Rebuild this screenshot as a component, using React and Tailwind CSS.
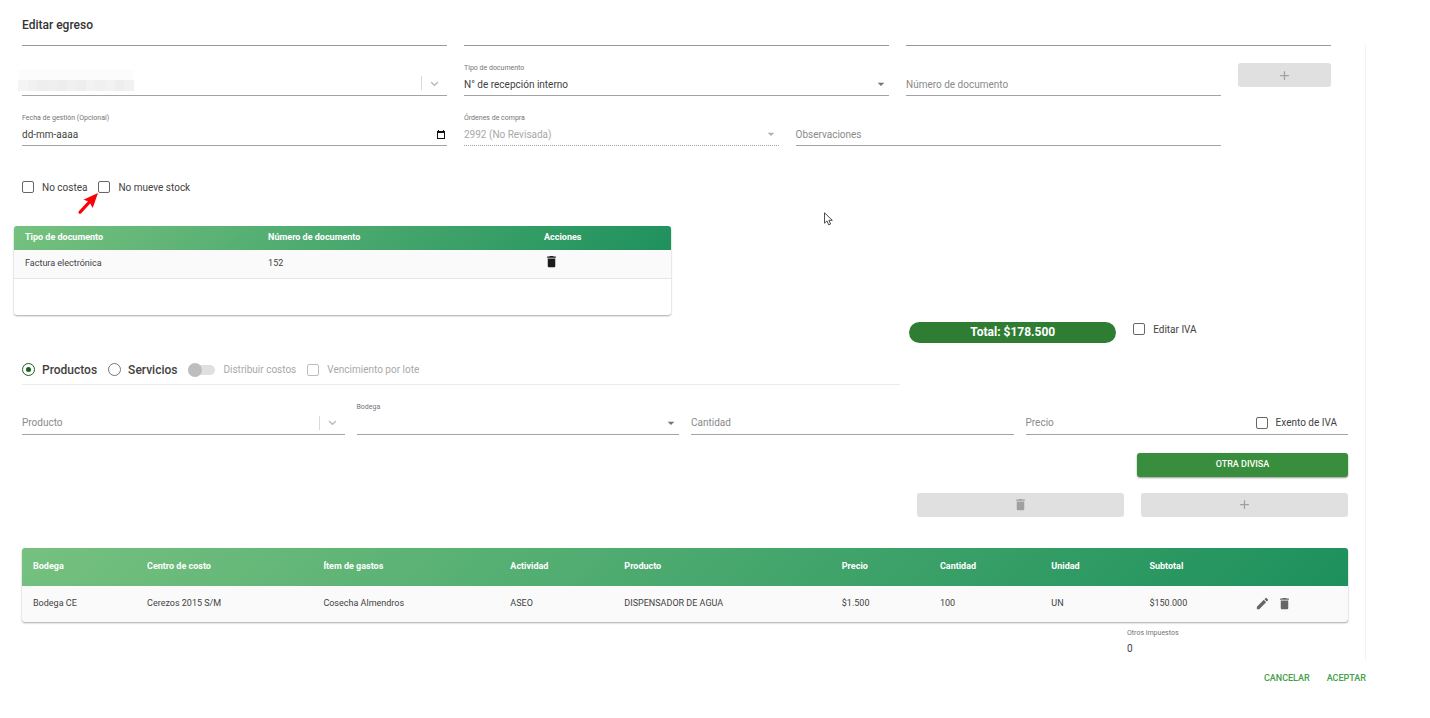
import React, { useId } from "react";
import { MdAdd, MdArrowDropDown, MdDelete, MdEdit } from "react-icons/md";

const line = "border-b border-[#a3a3a3]";

function Chevron() {
  return (
    <span className="flex items-center">
      <span className="h-[14px] w-px bg-[#d9d9d9]" />
      <svg viewBox="0 0 20 20" className="mx-[6px] size-[13px] fill-[#bdbdbd]" aria-hidden="true">
        <path d="M4.516 7.548c0.436-0.446 1.043-0.481 1.576 0l3.908 3.747 3.908-3.747c0.533-0.481 1.141-0.446 1.574 0 0.436 0.445 0.408 1.197 0 1.615-0.406 0.418-4.695 4.502-4.695 4.502-0.217 0.223-0.502 0.335-0.787 0.335s-0.57-0.112-0.789-0.335c0 0-4.287-4.084-4.695-4.502s-0.436-1.17 0-1.615z" />
      </svg>
    </span>
  );
}

function CalendarIcon() {
  return (
    <svg viewBox="0 0 8 9" className="h-[9px] w-2" aria-hidden="true">
      <path fill="#111" d="M0 1h1V0h1v1h4V0h1v1h1v8H0zM1 3v5h6V3z" />
    </svg>
  );
}

/* Text box whose label rests on the line until something is typed. */
function RestingField({ label, end, className = "" }) {
  const id = useId();
  return (
    <div className={`flex flex-col pt-[10px] ${line} ${className}`}>
      <div className="flex h-[22px] items-center">
        <div className="grid h-full min-w-0 flex-1 items-center">
          <input
            id={id}
            type="text"
            placeholder=" "
            className="peer col-start-1 row-start-1 h-full w-full min-w-0 bg-transparent text-[10px] text-[#424242] outline-none"
          />
          <label
            htmlFor={id}
            className="invisible col-start-1 row-start-1 text-[10px] text-[#8a8a8a] peer-placeholder-shown:visible"
          >
            {label}
          </label>
        </div>
        {end}
      </div>
    </div>
  );
}

function DateField({ label, className = "" }) {
  const id = useId();
  return (
    <div className={`flex flex-col ${line} ${className}`}>
      <label htmlFor={id} className="h-[10px] text-[7px] leading-[10px] text-[#757575]">
        {label}
      </label>
      <div className="flex h-[22px] items-center">
        <input
          id={id}
          type="text"
          placeholder="dd-mm-aaaa"
          className="h-full min-w-0 flex-1 bg-transparent text-[10px] text-[#424242] outline-none placeholder:text-[#424242]"
        />
        <button type="button" aria-label="Abrir calendario" className="mr-[2px]">
          <CalendarIcon />
        </button>
      </div>
    </div>
  );
}

function SelectField({ label, value, disabled, className = "" }) {
  const id = useId();
  return (
    <div className={`flex flex-col ${disabled ? "border-b border-dotted border-[#a3a3a3]" : line} ${className}`}>
      <label htmlFor={id} className="h-[10px] text-[7px] leading-[10px] text-[#757575]">
        {label}
      </label>
      <div className="grid h-[22px] items-center">
        <select
          id={id}
          disabled={disabled}
          className={`col-start-1 row-start-1 h-full w-full appearance-none bg-transparent text-[10px] outline-none ${
            disabled ? "text-[#a8a8a8] opacity-100" : "text-[#424242]"
          }`}
        >
          <option>{value}</option>
        </select>
        <MdArrowDropDown
          className={`pointer-events-none col-start-1 row-start-1 size-4 justify-self-end ${
            disabled ? "text-[#b0b0b0]" : "text-[#757575]"
          }`}
          aria-hidden="true"
        />
      </div>
    </div>
  );
}

function Check({ label, disabled }) {
  return (
    <label className={`flex items-center gap-2 text-[10px] whitespace-nowrap ${disabled ? "text-[#a8a8a8]" : "text-[#424242]"}`}>
      <input
        type="checkbox"
        disabled={disabled}
        className={`size-3 shrink-0 appearance-none rounded-[2px] border checked:bg-[#2e7d32] ${
          disabled ? "border-[#bdbdbd]" : "border-[#666]"
        }`}
      />
      {label}
    </label>
  );
}

function Radio({ label, checked }) {
  return (
    <label className="flex items-center gap-[7px] text-[12px] font-medium text-[#424242]">
      <input
        type="radio"
        name="tipo"
        defaultChecked={checked}
        className="size-[13px] shrink-0 appearance-none rounded-full border border-[#757575] bg-clip-content p-[3px] checked:border-[#1b5e20] checked:bg-[#1b5e20]"
      />
      {label}
    </label>
  );
}

function GreyButton({ label, children, className = "" }) {
  return (
    <button
      type="button"
      disabled
      aria-label={label}
      className={`flex h-6 items-center justify-center rounded-[3px] bg-[#e0e0e0] text-[#a0a0a0] ${className}`}
    >
      {children}
    </button>
  );
}

const gradient = "bg-[linear-gradient(135deg,#76c17f_0%,#1b8f5c_100%)]";
const card = "overflow-hidden rounded-[3px] shadow-[0_1px_2px_rgba(0,0,0,0.35)]";

const columns = [
  ["Bodega", "Bodega CE", "w-[8.6%]"],
  ["Centro de costo", "Cerezos 2015 S/M", "w-[13.3%]"],
  ["Ítem de gastos", "Cosecha Almendros", "w-[14.1%]"],
  ["Actividad", "ASEO", "w-[8.6%]"],
  ["Producto", "DISPENSADOR DE AGUA", "w-[16.4%]"],
  ["Precio", "$1.500", "w-[7.4%]"],
  ["Cantidad", "100", "w-[8.4%]"],
  ["Unidad", "UN", "w-[7.4%]"],
  ["Subtotal", "$150.000", "w-[8.1%]"],
];

const tiles = [
  "bg-[#f4f4f4]", "bg-[#f1f1f1]", "bg-[#eeeeee]", "bg-[#efefef]", "bg-[#ededed]", "bg-[#f0f0f0]",
  "bg-[#eeeeee]", "bg-[#f2f2f2]", "bg-[#f0f0f0]", "bg-[#f2f2f2]", "bg-[#eeeeee]", "bg-[#f1f1f1]",
];

function PersonField({ className = "" }) {
  return (
    <div className={`relative flex flex-col ${line} ${className}`}>
      <div className="flex h-8 items-end pb-[5px]">
        <input type="text" aria-label="Proveedor" className="h-4 min-w-0 flex-1 bg-transparent text-[10px] outline-none" />
        <Chevron />
      </div>
      <div className="absolute bottom-1 -left-1 w-[116px]" aria-hidden="true">
        <div className="h-[10px] bg-[#fcfcfc]" />
        <div className="flex h-[11px]">
          {tiles.map((t, i) => (
            <span key={i} className={`flex-1 ${t}`} />
          ))}
        </div>
      </div>
    </div>
  );
}

export default function App() {
  return (
    <div className="relative bg-white pr-16 font-['Roboto',sans-serif] text-[#424242]">
      <header className="flex h-[45px] items-center pt-1 pl-[22px]">
        <h1 className="text-[12px] font-medium text-[#333]">Editar egreso</h1>
      </header>

      <main className="border-r border-[#f3f3f3] pr-[17px] pl-[22px]">
        <section className="mr-[17px] grid grid-cols-12 gap-[17px]">
          <div className="col-span-4 h-px bg-[#999]" />
          <div className="col-span-4 h-px bg-[#999]" />
          <div className="col-span-4 h-px bg-[#999]" />

          <PersonField className="col-span-4" />
          <SelectField className="col-span-4" label="Tipo de documento" value="N° de recepción interno" />
          <RestingField className="col-span-3" label="Número de documento" />
          <GreyButton label="Agregar documento">
            <MdAdd className="size-[15px]" />
          </GreyButton>

          <DateField className="col-span-4" label="Fecha de gestión (Opcional)" />
          <SelectField className="col-span-3" disabled label="Órdenes de compra" value="2992 (No Revisada)" />
          <RestingField className="col-span-4" label="Observaciones" />
        </section>

        <div className="relative mt-[31px] flex h-5 items-center gap-[11px]">
          <Check label="No costea" />
          <Check label="No mueve stock" />
          <svg viewBox="0 0 20 21" className="absolute top-4 left-[56px] h-[21px] w-5 fill-[#fb0007]" aria-hidden="true">
            <path d="M20 0L14.7 15L12.2 10.6L3.2 20.2Q1.6 21.4.7 20.2Q0 19.2 1 18L10 8.2L5.4 6.7Z" />
          </svg>
        </div>

        <section className="mt-[29px] -ml-2 w-[calc(50%-6px)]">
          <div className={`${card} pb-9`}>
            <table className={`w-full table-fixed border-collapse text-left text-[9px] ${gradient}`}>
              <thead>
                <tr className="h-6 text-white">
                  <th className="w-[37%] pl-[11px] font-bold">Tipo de documento</th>
                  <th className="w-[42%] pl-[11px] font-bold">Número de documento</th>
                  <th className="pl-[11px] font-bold">Acciones</th>
                </tr>
              </thead>
              <tbody>
                <tr className="h-7 border-b border-[#e6e6e6] bg-[#fafafa]">
                  <td className="pl-[11px]">Factura electrónica</td>
                  <td className="pl-[11px]">152</td>
                  <td className="pb-1 pl-[11px]">
                    <button type="button" aria-label="Eliminar documento" className="flex text-[#1c1c1c]">
                      <MdDelete className="size-[15px]" />
                    </button>
                  </td>
                </tr>
              </tbody>
            </table>
          </div>
        </section>

        <section className="mt-[7px] -ml-2 mr-2 grid grid-cols-12 items-start gap-[17px]">
          <div className="col-span-2 col-start-9 rounded-full bg-[#2e7d32] text-center text-[12px] leading-[21px] font-bold text-white">
            Total: $178.500
          </div>
          <div className="col-span-2">
            <Check label="Editar IVA" />
          </div>
        </section>

        <section className="grid grid-cols-12 gap-x-[17px]">
          <div className="col-span-8 flex h-[42px] items-end gap-[11px] border-b border-[#ebebeb] pb-[5px]">
            <Radio label="Productos" checked />
            <Radio label="Servicios" />
            <label className="flex h-[18px] items-center gap-2 text-[10px] text-[#a8a8a8]">
              <input
                type="checkbox"
                role="switch"
                disabled
                className="flex h-[10px] w-[27px] appearance-none items-center rounded-full bg-[#e0e0e0] before:size-[14px] before:shrink-0 before:rounded-full before:bg-[#bdbdbd]"
              />
              Distribuir costos
            </label>
            <div className="flex h-[18px] items-center">
              <Check label="Vencimiento por lote" disabled />
            </div>
          </div>
        </section>

        <section className="mt-[17px] grid grid-cols-4 gap-3">
          <RestingField label="Producto" end={<Chevron />} />
          <SelectField label="Bodega" value="" />
          <RestingField label="Cantidad" />
          <RestingField
            label="Precio"
            end={
              <div className="pr-[11px]">
                <Check label="Exento de IVA" />
              </div>
            }
          />
        </section>

        <div className="mt-[18px] flex justify-end">
          <button
            type="button"
            className="h-6 w-[211px] rounded-[3px] bg-[#388e3c] text-[9px] font-medium text-white shadow-[0_1px_2px_rgba(0,0,0,0.4)]"
          >
            OTRA DIVISA
          </button>
        </div>

        <div className="mt-4 grid grid-cols-12 gap-[17px]">
          <GreyButton label="Eliminar producto" className="col-span-2 col-start-9">
            <MdDelete className="size-[15px]" />
          </GreyButton>
          <GreyButton label="Agregar producto" className="col-span-2">
            <MdAdd className="size-[15px]" />
          </GreyButton>
        </div>

        <section className={`mt-[31px] ${card}`}>
          <table className={`w-full table-fixed border-collapse text-left text-[9px] ${gradient}`}>
            <thead>
              <tr className="h-[38px] text-white">
                {columns.map(([head, , width]) => (
                  <th key={head} className={`${width} pl-[11px] font-bold`}>
                    {head}
                  </th>
                ))}
                <td />
              </tr>
            </thead>
            <tbody>
              <tr className="h-9 bg-[#fafafa]">
                {columns.map(([head, cell]) => (
                  <td key={head} className="pl-[11px] whitespace-nowrap">
                    {cell}
                  </td>
                ))}
                <td className="pl-[9px]">
                  <span className="flex gap-[7px] text-[#666]">
                    <button type="button" aria-label="Editar">
                      <MdEdit className="size-[15px]" />
                    </button>
                    <button type="button" aria-label="Eliminar">
                      <MdDelete className="size-[15px]" />
                    </button>
                  </span>
                </td>
              </tr>
            </tbody>
          </table>
        </section>

        <div className="mt-[6px] flex justify-end">
          <div className="flex w-[221px] flex-col">
            <label htmlFor="otros" className="h-[10px] text-[7px] leading-[10px] text-[#757575]">
              Otros impuestos
            </label>
            <input id="otros" type="text" defaultValue="0" className="h-[22px] w-full bg-transparent text-[10px] text-[#424242] outline-none" />
          </div>
        </div>
      </main>

      <footer className="flex h-[38px] items-center justify-end gap-[17px] text-[9px] font-medium text-[#43a047]">
        <button type="button">CANCELAR</button>
        <button type="button">ACEPTAR</button>
      </footer>

      <svg viewBox="0 0 9 14" className="absolute top-[212px] left-[824px] h-[14px] w-[9px]" aria-hidden="true">
        <path d="M.5.8V11.2L3 8.9L4.7 12.9L6.6 12L4.9 8.3H8.3Z" fill="#fff" stroke="#3a3a3f" strokeWidth="0.9" />
      </svg>
    </div>
  );
}
